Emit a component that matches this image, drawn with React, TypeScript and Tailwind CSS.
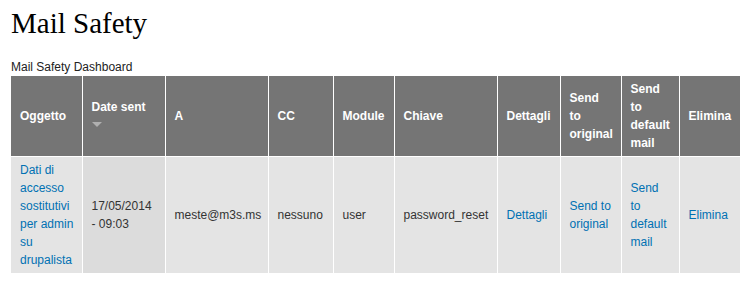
const COLS = [71, 83, 103, 65, 61, 103, 63, 61, 58, 61];

const HEADERS = [
  "Oggetto",
  "Date sent",
  "A",
  "CC",
  "Module",
  "Chiave",
  "Dettagli",
  "Send to original",
  "Send to default mail",
  "Elimina",
];

export default function App() {
  return (
    <div className="bg-white px-[11px] pt-[5px] font-['Liberation_Sans',Arial,sans-serif] text-[12px] text-[#333]">
      <h1 className="font-['Liberation_Serif','Times_New_Roman',serif] text-[29px] leading-[36px] text-black">
        Mail Safety
      </h1>
      <div className="mt-[18px] leading-[17px] text-[#222]">Mail Safety Dashboard</div>
      <table className="table-fixed border-collapse w-[729px] leading-[18px]">
        <colgroup>
          {COLS.map((w, i) => (
            <col key={i} style={{ width: w }} />
          ))}
        </colgroup>
        <thead>
          <tr className="bg-[#757575] text-white h-[80px] border-b border-white">
            {HEADERS.map((h, i) => (
              <th
                key={h}
                className={`text-left font-bold align-middle px-[9px] py-[4px] ${i < HEADERS.length - 1 ? "border-r border-white" : ""}`}
              >
                {h}
                {i === 1 && (
                  <span className="block h-[18px] pt-[6px]">
                    <span className="block w-0 h-0 border-l-[5.5px] border-r-[5.5px] border-t-[5px] border-l-transparent border-r-transparent border-t-[#b0b0b0]" />
                  </span>
                )}
              </th>
            ))}
          </tr>
        </thead>
        <tbody>
          <tr className="bg-[#e4e4e4] h-[116px]">
            <td className="align-middle pl-[9px] pr-[4px] py-[4px] border-r border-white">
              <a className="text-[#0071b3]">Dati di accesso sostitutivi per admin su drupalista</a>
            </td>
            <td className="align-middle px-[9px] py-[4px] border-r border-white bg-[#dcdcdc]">
              17/05/2014 - 09:03
            </td>
            <td className="align-middle px-[9px] py-[4px] border-r border-white">meste@m3s.ms</td>
            <td className="align-middle px-[9px] py-[4px] border-r border-white">nessuno</td>
            <td className="align-middle px-[9px] py-[4px] border-r border-white">user</td>
            <td className="align-middle px-[9px] py-[4px] border-r border-white">password_reset</td>
            <td className="align-middle px-[9px] py-[4px] border-r border-white">
              <a className="text-[#0071b3]">Dettagli</a>
            </td>
            <td className="align-middle px-[9px] py-[4px] border-r border-white">
              <a className="text-[#0071b3]">Send to original</a>
            </td>
            <td className="align-middle px-[9px] py-[4px] border-r border-white">
              <a className="text-[#0071b3]">Send to default mail</a>
            </td>
            <td className="align-middle px-[9px] py-[4px]">
              <a className="text-[#0071b3]">Elimina</a>
            </td>
          </tr>
        </tbody>
      </table>
    </div>
  );
}
